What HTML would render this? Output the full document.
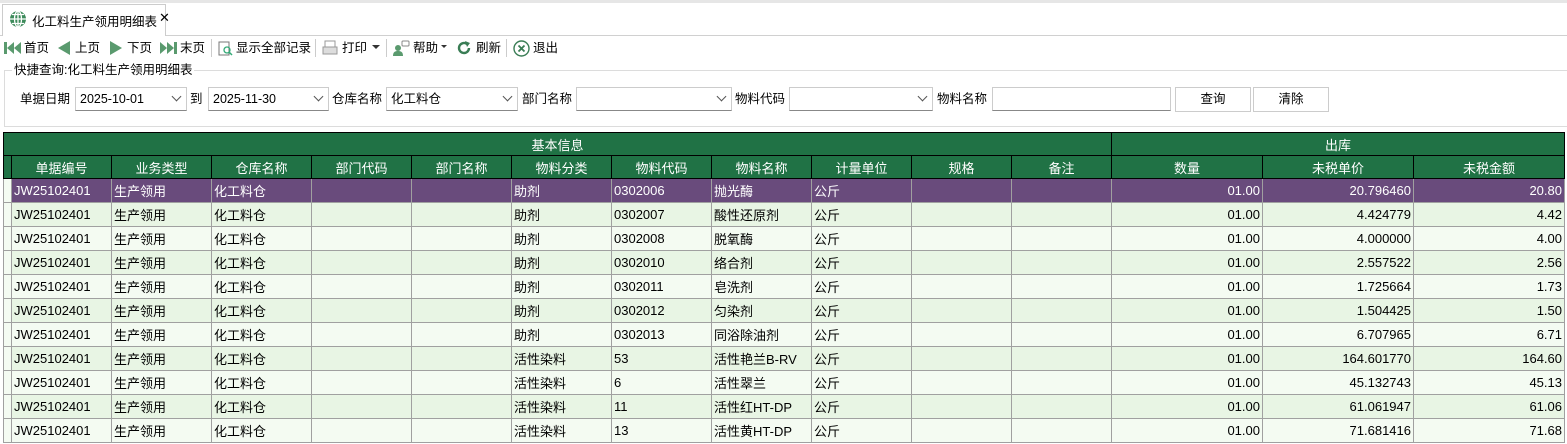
<!DOCTYPE html>
<html><head><meta charset="utf-8"><style>
*{margin:0;padding:0;box-sizing:border-box}
body{width:1567px;height:444px;overflow:hidden;background:#fff;font-family:"Liberation Sans","Noto Sans CJK SC",sans-serif;font-size:12px;color:#000;position:relative}
.a{position:absolute;white-space:nowrap}
.tabbar{left:0;top:0;width:1567px;height:36px;background:#fff;border-top:3px solid #e6e6e6;border-bottom:1px solid #d0d0d0}
.tab{left:2px;top:4px;width:164px;height:32px;background:#fff;border:1px solid #ccc;border-bottom:none}
.tb{top:37px;height:22px;line-height:22px;font-size:12.5px}
.sep{top:39px;width:1px;height:18px;background:#ccc}
.gb{left:4px;top:70px;width:1563px;height:57px;border:1px solid #dcdcdc;border-right:none}
.lbl{top:90px;line-height:18px;font-size:12.5px}
.cb{top:87px;height:24px;border:1px solid #ccc;border-bottom:1px solid #888;background:#fff;line-height:22px;padding-left:4px;font-size:12.5px}
.cb i{position:absolute;right:6px;top:5px;width:7px;height:7px;border-right:1px solid #555;border-bottom:1px solid #555;transform:rotate(45deg)}
.btn{top:87px;height:25px;border:1px solid #ccc;background:#fff;text-align:center;line-height:23px;font-size:12.5px}
table{position:absolute;left:3px;top:132px;border-collapse:collapse;table-layout:fixed;font-size:13px}
td{border:1px solid #000;height:24px;padding:0 2px;overflow:hidden;white-space:nowrap}
.h td{background:#207245;color:#fff;text-align:center;height:23px}
.r td{border-color:#a0a0a0}
.r1 td{background:#e8f5e4}.r2 td{background:#f4fbf2}
.sel td{background:#694b7c;color:#fff;border-color:#a0a0a0}
td.n{text-align:right}
td.rh{background:#f4fbf2!important;border-color:#a0a0a0}
</style></head><body>
<div class="a tabbar"></div>
<div class="a tab"></div>
<svg class="a" style="left:9px;top:10px" width="18" height="18" viewBox="0 0 18 18"><circle cx="9" cy="9" r="8" fill="#3d8b5b"/><path d="M1 9h16M9 1v16M3 4.5h12M3 13.5h12" stroke="#fff" stroke-width="1.3"/><ellipse cx="9" cy="9" rx="3.5" ry="8" fill="none" stroke="#fff" stroke-width="1.3"/></svg>
<div class="a" style="left:32px;top:11px;font-size:12.5px">化工料生产领用明细表</div>
<div class="a" style="left:159px;top:10px;font-size:13px">✕</div>

<svg class="a" style="left:4px;top:41px" width="17" height="14"><rect x="0" y="1" width="3" height="12" fill="#5a9a6e"/><path d="M10 1L3 7l7 6zM17 1l-7 6 7 6z" fill="#5a9a6e"/></svg>
<div class="a tb" style="left:24px">首页</div>
<svg class="a" style="left:57px;top:40px" width="14" height="16"><path d="M13 1L1 8l12 7z" fill="#5a9a6e"/></svg>
<div class="a tb" style="left:75px">上页</div>
<svg class="a" style="left:109px;top:40px" width="14" height="16"><path d="M1 1l12 7-12 7z" fill="#5a9a6e"/></svg>
<div class="a tb" style="left:127px">下页</div>
<svg class="a" style="left:160px;top:41px" width="17" height="14"><path d="M0 1l7 6-7 6zM7 1l7 6-7 6z" fill="#5a9a6e"/><rect x="14" y="1" width="3" height="12" fill="#5a9a6e"/></svg>
<div class="a tb" style="left:180px">末页</div>
<div class="a sep" style="left:211px"></div>
<svg class="a" style="left:218px;top:40px" width="16" height="17"><rect x="1" y="2" width="10" height="13" fill="none" stroke="#777"/><circle cx="9" cy="10" r="3" fill="none" stroke="#3a7" stroke-width="1.3"/><path d="M11 12l3 3" stroke="#3a7" stroke-width="1.5"/></svg>
<div class="a tb" style="left:236px">显示全部记录</div>
<div class="a sep" style="left:315px"></div>
<svg class="a" style="left:322px;top:40px" width="16" height="16"><rect x="3" y="1" width="10" height="6" fill="#fff" stroke="#999"/><rect x="1" y="7" width="14" height="7" fill="#ddd" stroke="#999"/></svg>
<div class="a tb" style="left:342px">打印</div>
<div class="a" style="left:372px;top:45px;border:4px solid transparent;border-top:4px solid #333"></div>
<div class="a sep" style="left:386px"></div>
<svg class="a" style="left:392px;top:40px" width="18" height="17"><circle cx="6" cy="8" r="3" fill="#5a9a6e"/><path d="M1 16c0-4 2-5 5-5s5 1 5 5z" fill="#5a9a6e"/><rect x="10" y="1" width="7" height="5" rx="1" fill="none" stroke="#888"/></svg>
<div class="a tb" style="left:413px">帮助</div>
<div class="a" style="left:441px;top:45px;border:3px solid transparent;border-top:3px solid #333"></div>
<svg class="a" style="left:456px;top:40px" width="16" height="16"><path d="M13 8a5 5 0 1 1-2-4" fill="none" stroke="#3a7d55" stroke-width="2.4"/><path d="M9 1l5 2-3 4z" fill="#3a7d55"/></svg>
<div class="a tb" style="left:476px">刷新</div>
<div class="a sep" style="left:506px"></div>
<svg class="a" style="left:513px;top:40px" width="17" height="17"><circle cx="8.5" cy="8.5" r="7.5" fill="none" stroke="#3a7d55" stroke-width="1.4"/><path d="M5.5 5.5l6 6M11.5 5.5l-6 6" stroke="#3a7d55" stroke-width="1.8"/></svg>
<div class="a tb" style="left:533px">退出</div>

<div class="a gb"></div>
<div class="a" style="left:12px;top:62px;background:#fff;padding:0 2px;line-height:16px;font-size:12.5px">快捷查询:化工料生产领用明细表</div>
<div class="a lbl" style="left:20px">单据日期</div>
<div class="a cb" style="left:75px;width:112px">2025-10-01<i></i></div>
<div class="a lbl" style="left:190px">到</div>
<div class="a cb" style="left:208px;width:121px">2025-11-30<i></i></div>
<div class="a lbl" style="left:332px">仓库名称</div>
<div class="a cb" style="left:386px;width:132px">化工料仓<i></i></div>
<div class="a lbl" style="left:522px">部门名称</div>
<div class="a cb" style="left:576px;width:156px"><i></i></div>
<div class="a lbl" style="left:735px">物料代码</div>
<div class="a cb" style="left:789px;width:144px"><i></i></div>
<div class="a lbl" style="left:937px">物料名称</div>
<div class="a cb" style="left:992px;width:179px"></div>
<div class="a btn" style="left:1175px;width:76px">查询</div>
<div class="a btn" style="left:1253px;width:76px">清除</div>

<table>
<colgroup><col style="width:8px"><col style="width:100px"><col style="width:100px"><col style="width:100px"><col style="width:100px"><col style="width:100px"><col style="width:100px"><col style="width:100px"><col style="width:100px"><col style="width:100px"><col style="width:100px"><col style="width:100px"><col style="width:151px"><col style="width:151px"><col style="width:151px"></colgroup>
<tr class="h"><td colspan="12">基本信息</td><td colspan="3">出库</td></tr>
<tr class="h"><td></td><td>单据编号</td><td>业务类型</td><td>仓库名称</td><td>部门代码</td><td>部门名称</td><td>物料分类</td><td>物料代码</td><td>物料名称</td><td>计量单位</td><td>规格</td><td>备注</td><td>数量</td><td>未税单价</td><td>未税金额</td></tr>
<tr class="sel"><td class="rh"></td><td>JW25102401</td><td>生产领用</td><td>化工料仓</td><td></td><td></td><td>助剂</td><td>0302006</td><td>抛光酶</td><td>公斤</td><td></td><td></td><td class="n">01.00</td><td class="n">20.796460</td><td class="n">20.80</td></tr>
<tr class="r r1"><td class="rh"></td><td>JW25102401</td><td>生产领用</td><td>化工料仓</td><td></td><td></td><td>助剂</td><td>0302007</td><td>酸性还原剂</td><td>公斤</td><td></td><td></td><td class="n">01.00</td><td class="n">4.424779</td><td class="n">4.42</td></tr>
<tr class="r r2"><td class="rh"></td><td>JW25102401</td><td>生产领用</td><td>化工料仓</td><td></td><td></td><td>助剂</td><td>0302008</td><td>脱氧酶</td><td>公斤</td><td></td><td></td><td class="n">01.00</td><td class="n">4.000000</td><td class="n">4.00</td></tr>
<tr class="r r1"><td class="rh"></td><td>JW25102401</td><td>生产领用</td><td>化工料仓</td><td></td><td></td><td>助剂</td><td>0302010</td><td>络合剂</td><td>公斤</td><td></td><td></td><td class="n">01.00</td><td class="n">2.557522</td><td class="n">2.56</td></tr>
<tr class="r r2"><td class="rh"></td><td>JW25102401</td><td>生产领用</td><td>化工料仓</td><td></td><td></td><td>助剂</td><td>0302011</td><td>皂洗剂</td><td>公斤</td><td></td><td></td><td class="n">01.00</td><td class="n">1.725664</td><td class="n">1.73</td></tr>
<tr class="r r1"><td class="rh"></td><td>JW25102401</td><td>生产领用</td><td>化工料仓</td><td></td><td></td><td>助剂</td><td>0302012</td><td>匀染剂</td><td>公斤</td><td></td><td></td><td class="n">01.00</td><td class="n">1.504425</td><td class="n">1.50</td></tr>
<tr class="r r2"><td class="rh"></td><td>JW25102401</td><td>生产领用</td><td>化工料仓</td><td></td><td></td><td>助剂</td><td>0302013</td><td>同浴除油剂</td><td>公斤</td><td></td><td></td><td class="n">01.00</td><td class="n">6.707965</td><td class="n">6.71</td></tr>
<tr class="r r1"><td class="rh"></td><td>JW25102401</td><td>生产领用</td><td>化工料仓</td><td></td><td></td><td>活性染料</td><td>53</td><td>活性艳兰B-RV</td><td>公斤</td><td></td><td></td><td class="n">01.00</td><td class="n">164.601770</td><td class="n">164.60</td></tr>
<tr class="r r2"><td class="rh"></td><td>JW25102401</td><td>生产领用</td><td>化工料仓</td><td></td><td></td><td>活性染料</td><td>6</td><td>活性翠兰</td><td>公斤</td><td></td><td></td><td class="n">01.00</td><td class="n">45.132743</td><td class="n">45.13</td></tr>
<tr class="r r1"><td class="rh"></td><td>JW25102401</td><td>生产领用</td><td>化工料仓</td><td></td><td></td><td>活性染料</td><td>11</td><td>活性红HT-DP</td><td>公斤</td><td></td><td></td><td class="n">01.00</td><td class="n">61.061947</td><td class="n">61.06</td></tr>
<tr class="r r2"><td class="rh"></td><td>JW25102401</td><td>生产领用</td><td>化工料仓</td><td></td><td></td><td>活性染料</td><td>13</td><td>活性黄HT-DP</td><td>公斤</td><td></td><td></td><td class="n">01.00</td><td class="n">71.681416</td><td class="n">71.68</td></tr>
</table>
</body></html>
